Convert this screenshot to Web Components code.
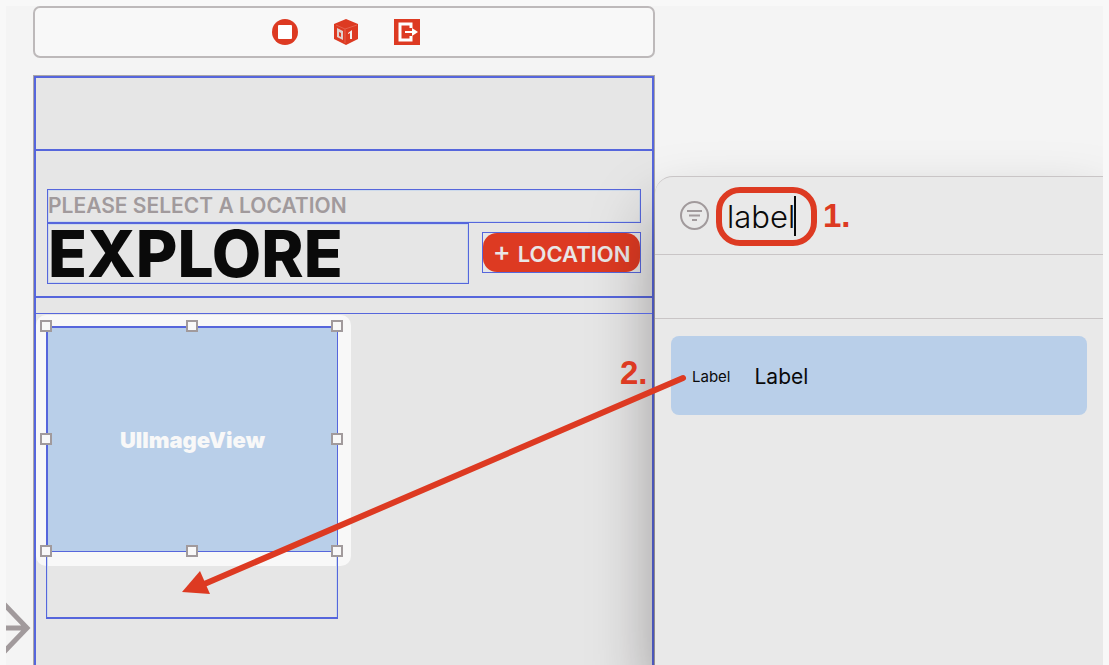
<!DOCTYPE html>
<html lang="en">
<head>
<meta charset="utf-8">
<title>Interface Builder</title>
<style>
  :root {
    --red: #dd3a22;
    --blue: #5666dc;
    --pale: #b9cfe9;
    --grey: #a19a9c;
    --rule: #c9c5c6;
  }
  body { margin: 0; font-family: Inter, "Liberation Sans", sans-serif; background: #f8f8f8; color: #0a0a0a; }
</style>
</head>
<body>
<builder-app></builder-app>
<script>
const define = (name, html) => {
  const template = document.createElement('template');
  template.innerHTML = html;
  customElements.define(name, class extends HTMLElement {
    constructor() {
      super();
      this.attachShadow({ mode: 'open' }).append(template.content.cloneNode(true));
    }
  });
};

define('scene-dock', `
  <style>
    :host { display: flex; justify-content: center; align-items: center; gap: 33px; height: 52px; box-sizing: border-box;
      padding-left: 3px; border: 2px solid #bdb9ba; border-radius: 7px; background: #f8f8f8; }
    button { display: block; padding: 0; border: 0; background: none; width: 28px; height: 28px; }
    svg { display: block; }
  </style>
  <button aria-label="View controller"><svg width="28" height="28" viewBox="0 0 28 28">
    <circle cx="14" cy="14" r="13" fill="#dd3a22"/><rect x="7" y="7" width="14" height="14" rx="1" fill="#fff"/></svg></button>
  <button aria-label="First responder"><svg width="28" height="28" viewBox="0 0 28 28">
    <path d="M14 1l12 5v15l-12 6-12-6V6z" fill="#dd3a22"/>
    <path d="M4 7l9 4v14M13 11l12-4" fill="none" stroke="#e4604c" stroke-width="1"/>
    <path d="M5 10l6 3v9l-6-3zM7 14v4l2 1v-4z" fill="#e0cfcc" fill-rule="evenodd"/>
    <path d="M16 15l4-3v9h-2v-6l-2 1z" fill="#f4f0ef"/></svg></button>
  <button aria-label="Exit"><svg width="28" height="28" viewBox="0 0 28 28">
    <rect x="1" y="1" width="26" height="26" fill="#dd3a22"/>
    <path d="M18 10V6H7v16h11v-4" fill="none" stroke="#fff" stroke-width="3"/>
    <path d="M12 13h7v-3l6 4-6 4v-3h-7z" fill="#fff"/></svg></button>`);

define('header-view', `
  <style>
    :host { display: block; border: solid var(--blue); border-width: 2px 0; padding: 38px 11px 12px; }
    p, h1 { margin: 0; box-sizing: border-box; border: 1px solid var(--blue); white-space: nowrap;
      box-shadow: inset 0 0 0 1px #cddaeb; }
    p { height: 34px; line-height: 32px; font-size: 21px; font-weight: 600; color: var(--grey); }
    .row { display: flex; gap: 13px; }
    h1 { flex: 1; min-width: 0; height: 61px; line-height: 60px; font-size: 64px; font-weight: 800; }
    .frame { margin-top: 9px; width: 159px; height: 41px; box-sizing: border-box; border: 1px solid var(--blue); }
    button { display: flex; align-items: center; justify-content: center; gap: 7px; width: 100%; height: 100%;
      padding: 2px 0 0; border: 0; border-radius: 14px; background: var(--red);
      color: #e9e6e6; font: 600 22px/36px Inter, sans-serif; white-space: nowrap; }
    .plus { font-size: 27px; font-weight: 500; line-height: 32px; padding-bottom: 4px; }
  </style>
  <p>PLEASE SELECT A LOCATION</p>
  <div class="row"><h1>EXPLORE</h1><div class="frame"><button><span class="plus">+</span><span>LOCATION</span></button></div></div>`);

define('image-view', `
  <style>
    :host { display: grid; place-items: center; position: relative; height: 226px; box-sizing: border-box;
      border: 2px solid var(--blue); border-width: 2px 1px 1px 2px; background: var(--pale);
      color: #f8f8f8; font-size: 22px; line-height: 28px; font-weight: 900; }
    .halo { position: absolute; z-index: -1; inset: -13px -14px -15px -12px; border-radius: 10px; background: #f8f8f8; }
    .handles { position: absolute; inset: -2px 0 0 -2px; }
    i { position: absolute; width: 12px; height: 12px; box-sizing: border-box; border: 2px solid var(--grey);
      background: #f8f8f8; transform: translate(-50%, -50%); }
    .l { left: 0; } .c { left: 50%; } .r { left: 100%; }
    .t { top: 0; } .m { top: 50%; } .b { top: 100%; }
  </style>
  <div class="halo"></div><slot></slot>
  <div class="handles"><i class="l t"></i><i class="c t"></i><i class="r t"></i><i class="l m"></i>
  <i class="r m"></i><i class="l b"></i><i class="c b"></i><i class="r b"></i></div>`);

define('device-view', `
  <style>
    :host { display: flex; flex-direction: column; flex: 1; margin-top: 17px; box-sizing: border-box; background: #e6e6e6;
      border: 1px solid #aaa6a8; border-bottom: 0; }
    .view { flex: 1; border: 2px solid var(--blue); border-bottom: 0; }
    .status { height: 71px; }
    .collection { position: relative; z-index: 0; margin-top: 15px; border-top: 1px solid var(--blue); padding: 12px 10px; overflow: clip; }
    .cell { width: 292px; height: 293px; box-sizing: border-box; position: relative; }
    .cell::after { content: ""; display: block; height: 67px; box-sizing: border-box; border: solid var(--blue); border-width: 0 1px 2px;
      box-shadow: inset 1px 0 #cddaeb, inset -1px 0 #cddaeb; }
  </style>
  <div class="view">
    <div class="status"></div>
    <header-view></header-view>
    <div class="collection"><div class="cell"><image-view>UIImageView</image-view></div></div>
  </div>`);

define('search-bar', `
  <style>
    :host { display: flex; align-items: center; height: 77px; border-bottom: 1px solid var(--rule); padding-left: 24px; }
    svg { display: block; flex: none; }
    label { display: flex; align-items: center; width: 101px; height: 59px; box-sizing: border-box; margin: 2px 6px 0;
      border: 6px solid var(--red); border-radius: 24px; padding-left: 5px; }
    input { field-sizing: content; border: 0; padding: 0; outline: 0; background: none; color: #0a0a0a;
      font: 300 31px/36px Inter, sans-serif; }
    .caret { width: 2px; height: 40px; margin-left: -1px; margin-bottom: 2px; background: #0a0a0a; }
    b { font: 700 33px/40px "Liberation Sans", sans-serif; color: var(--red); }
  </style>
  <svg width="31" height="31" viewBox="0 0 31 31" fill="none" stroke="#a19a9c" stroke-width="2">
    <circle cx="15.500" cy="15.500" r="13.500"/><path d="M8 11h15M10 15.500h11M13 20h5"/></svg>
  <label><input value="label" aria-label="Search objects"><span class="caret"></span></label>
  <b>1.</b>`);

define('library-item', `
  <style>
    :host { display: flex; align-items: center; height: 79px; margin: 17px 16px; padding: 2px 0 0 21px; gap: 24px;
      box-sizing: border-box; border-radius: 8px; background: var(--pale); font-size: 21px; line-height: 28px; }
    .thumb { font-size: 15px; }
  </style>
  <span class="thumb">Label</span><span><slot></slot></span>`);

define('library-panel', `
  <style>
    :host { display: block; margin-top: 170px; border-top: 1px solid var(--rule); border-top-left-radius: 18px; background: #e9e9e9;
      box-shadow: 0 36px 64px rgba(20, 10, 15, .36); }
    .filters { height: 63px; border-bottom: 1px solid var(--rule); }
  </style>
  <search-bar></search-bar>
  <div class="filters"></div>
  <library-item>Label</library-item>`);

define('builder-app', `
  <style>
    :host { display: block; padding: 6px 6px 0; }
    main { position: relative; display: grid; grid-template-columns: 27px minmax(0, 622fr) minmax(0, 448fr);
      min-height: calc(100vh - 6px); background: #f4f4f4; overflow: clip; }
    .entry { align-self: end; padding-bottom: 11px; }
    .scene { display: flex; flex-direction: column; }
    svg { display: block; }
    .drag { position: absolute; left: 176px; top: 360px; }
    .step { position: absolute; left: 614px; top: 347px; font: 700 33px/40px "Liberation Sans", sans-serif; color: var(--red); }
  </style>
  <main>
    <div class="entry"><svg width="26" height="52" viewBox="0 0 26 52" fill="none" stroke="#a19a9c" stroke-width="5">
      <path d="M-2 2L21 26L-2 50M-2 26H20"/></svg></div>
    <div class="scene"><scene-dock></scene-dock><device-view></device-view></div>
    <library-panel></library-panel>
    <svg class="drag" width="510" height="240" viewBox="0 0 510 240">
      <path d="M501 12L20 219" stroke="#dd3a22" stroke-width="6" stroke-linecap="round"/>
      <path d="M0 226L18 205L28 228z" fill="#dd3a22"/></svg>
    <b class="step">2.</b>
  </main>`);
</script>
</body>
</html>
